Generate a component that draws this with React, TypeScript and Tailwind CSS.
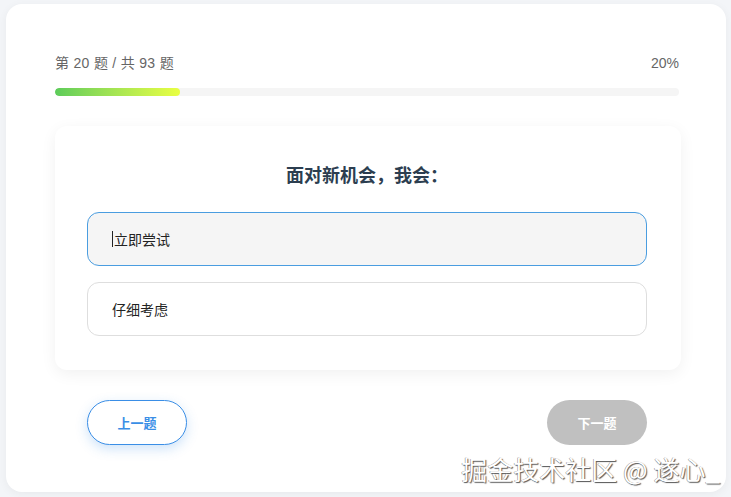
import { useState } from "react";

const options = ["立即尝试", "仔细考虑"];

export default function App() {
  const [selected, setSelected] = useState(0);
  const current = 20;
  const total = 93;
  const percent = 20;

  return (
    <div className="relative h-[497px] w-[731px] overflow-hidden bg-[#f3f5f8] pl-[6px] pr-[5px] pt-[4px] pb-[5px] font-['Noto_Sans_CJK_SC','Liberation_Sans',sans-serif]">
      <div className="h-full rounded-2xl bg-white pl-[49px] pr-[47px] pt-[49px] shadow-[0_2px_10px_rgba(0,0,0,0.05)]">
        <div className="flex items-center justify-between font-['Liberation_Sans','Noto_Sans_CJK_SC',sans-serif] text-[14px] leading-[20px] text-[#666]">
          <span className="tracking-[0.3px]">
            第 {current} 题 / 共 {total} 题
          </span>
          <span>{percent}%</span>
        </div>
        <div className="mt-[15px] h-[8px] w-full overflow-hidden rounded-full bg-[#f5f5f5]">
          <div
            className="h-full rounded-full bg-gradient-to-r from-[#5ccc5a] to-[#e9ff42]"
            style={{ width: `${percent}%` }}
          />
        </div>

        <div className="mt-[30px] mr-[-2px] rounded-xl bg-white pl-8 pr-[34px] pt-[35px] pb-[34px] shadow-[0_4px_16px_rgba(0,0,0,0.06)]">
          <h2 className="text-center text-[18px] font-bold leading-[26px] text-[#2c3e50]">面对新机会，我会：</h2>
          <div className="mt-[25px] flex flex-col gap-4">
            {options.map((opt, i) => (
              <button
                key={opt}
                type="button"
                onClick={() => setSelected(i)}
                className={
                  i === selected
                    ? "flex h-[54px] items-center rounded-xl border border-[#4a9de0] bg-[#f5f5f5] px-6 text-left text-[14px] text-[#222]"
                    : "flex h-[54px] items-center rounded-xl border border-[#dedede] bg-white px-6 text-left text-[14px] text-[#222]"
                }
              >
                {i === selected ? <span className="mr-[1px] h-[16px] w-px bg-[#222]" /> : null}
                {opt}
              </button>
            ))}
          </div>
        </div>

        <div className="mt-[30px] flex items-center justify-between pl-8 pr-[32px]">
          <button
            type="button"
            className="h-[45px] w-[100px] rounded-full border border-[#3a8ee6] bg-white text-[13px] font-bold text-[#3a8ee6] shadow-[0_4px_12px_rgba(58,142,230,0.25)]"
          >
            上一题
          </button>
          <button
            type="button"
            className="h-[45px] w-[100px] rounded-full bg-[#c0c0c0] text-[13px] font-bold text-white"
          >
            下一题
          </button>
        </div>
      </div>

      <div className="absolute bottom-[12px] right-[11px] text-[26px] leading-[32px] text-white [text-shadow:1px_1px_1px_#555,-0.5px_-0.5px_0_#888]">
        掘金技术社区 @ 遂心_
      </div>
    </div>
  );
}
